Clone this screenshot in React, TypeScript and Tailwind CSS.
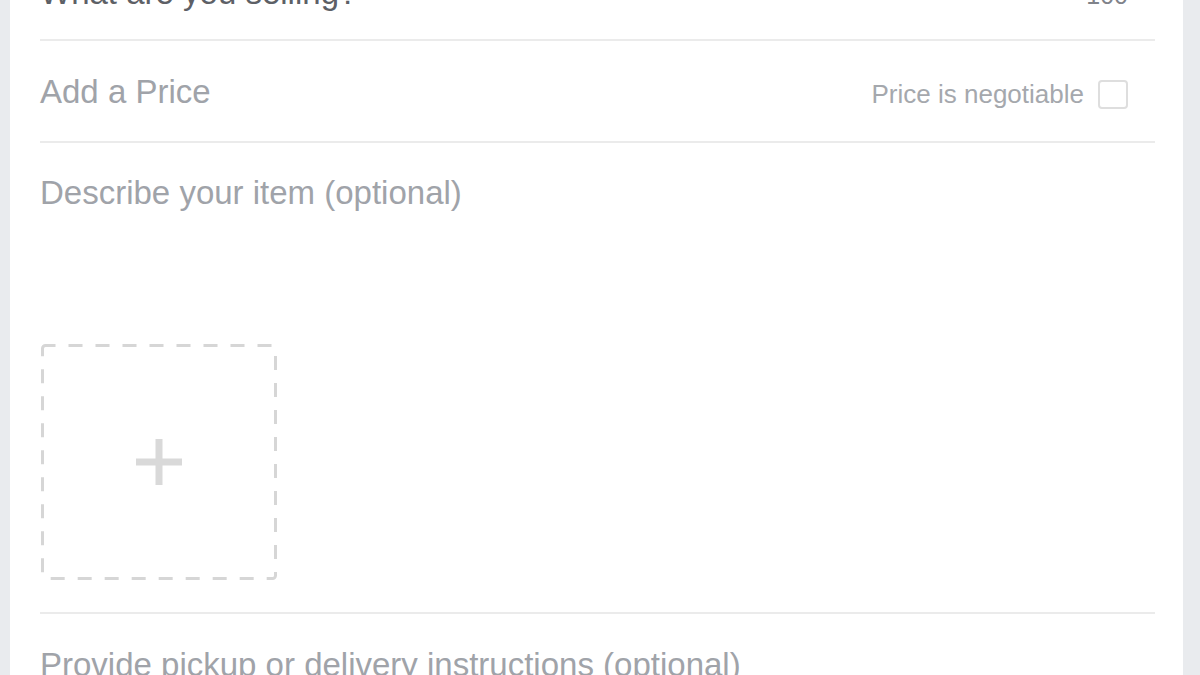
import React from 'react';

// ─── Sell-item composer (Marketplace style) ──────────────────────────────────
const PLACEHOLDER = 'text-[#a0a3a9]';

const Divider: React.FC = () => <div className="h-[2px] bg-[#ebebeb] shrink-0" />;

const PhotoSlot: React.FC = () => (
  <button className="block w-[238px] h-[238px]">
    <svg width="238" height="238" viewBox="0 0 238 238" aria-hidden>
      <rect
        x="2.5"
        y="2.5"
        width="233"
        height="233"
        rx="3"
        fill="none"
        stroke="#d6d6d6"
        strokeWidth="3"
        strokeDasharray="14 13"
        strokeDashoffset="4"
      />
      <path d="M119 96v46M96 119h46" stroke="#d9d9d9" strokeWidth="7" />
    </svg>
  </button>
);

const App: React.FC = () => {
  return (
    <div
      className="w-[1200px] h-[675px] overflow-hidden bg-[#e9ebee] pl-[10px] pr-[17px]"
      style={{ fontFamily: '"Liberation Sans", Arial, sans-serif' }}
    >
      <div className="h-full bg-white pl-[30px] pr-[28px] flex flex-col overflow-hidden">
        {/* Title (scrolled off the top) */}
        <div className="-mt-[24px] pb-[30px] flex items-start justify-between pr-[27px] shrink-0">
          <span className="text-[33px] leading-none text-[#5d6066]">What are you selling?</span>
          <span className="text-[25px] leading-none text-[#80838a] mt-[7px]">100</span>
        </div>
        <Divider />

        {/* Price */}
        <div className="h-[100px] flex items-center justify-between pr-[27px] shrink-0">
          <span className={`text-[33px] leading-none ${PLACEHOLDER}`}>Add a Price</span>
          <label className="flex items-center gap-[14px] mt-[6px]">
            <span className="text-[26px] leading-none text-[#a5a8ad]">Price is negotiable</span>
            <span className="w-[30px] h-[29px] rounded-[4px] border-2 border-[#dedede] bg-white" />
          </label>
        </div>
        <Divider />

        {/* Description + photo */}
        <div className="pt-[33px] pb-[31px] shrink-0">
          <p className={`text-[33px] leading-none ${PLACEHOLDER}`}>Describe your item (optional)</p>
          <div className="h-[134px]" />
          <PhotoSlot />
        </div>
        <Divider />

        {/* Pickup */}
        <div className="pt-[34px] shrink-0">
          <p className={`text-[33px] leading-none ${PLACEHOLDER}`}>Provide pickup or delivery instructions (optional)</p>
        </div>
      </div>
    </div>
  );
};

export default App;
